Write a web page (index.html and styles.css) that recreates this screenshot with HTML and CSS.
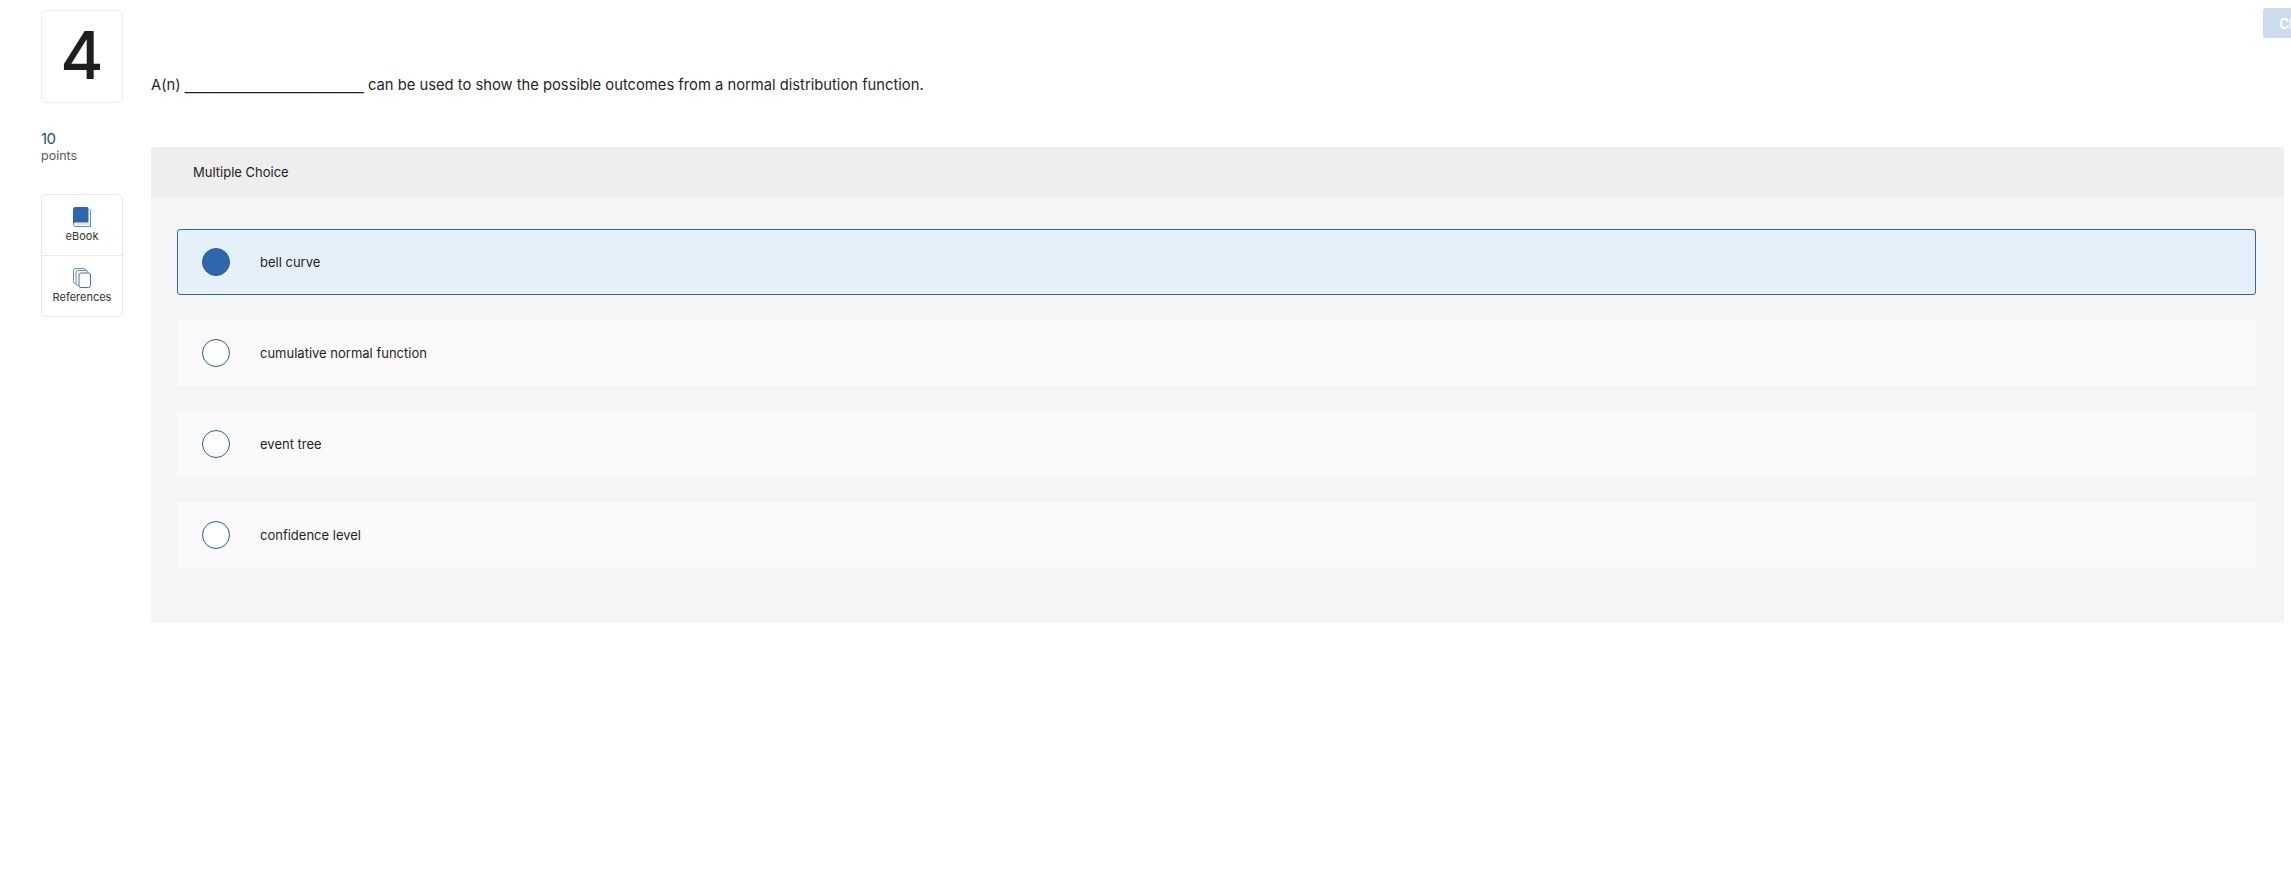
FILE: index.html
```html
<!DOCTYPE html>
<html lang="en">
<head>
<meta charset="utf-8">
<title>Question 4</title>
<link rel="stylesheet" href="styles.css">
</head>
<body>
<button class="check-btn" type="button">Check my work</button>
<div class="page">
  <aside class="side">
    <div class="qnum">4</div>
    <div class="pts">
      <div class="pts-val">10</div>
      <div class="pts-label">points</div>
    </div>
    <div class="tools">
      <div class="tool">
        <svg class="tool-icon" viewBox="0 0 18 20" width="18" height="20" aria-hidden="true">
          <path d="M16 2.500h.5a1 1 0 0 1 1 1V19.500H3a2.500 2.500 0 0 1-2.500-2.500V3" fill="none" stroke="#5d8cc6"/>
          <path d="M3 17H17" stroke="#b4cce8" fill="none"/>
          <path d="M2.500 0H14a1.500 1.500 0 0 1 1.500 1.500V15.500H3a3 3 0 0 0-3 1.500V2.500A2.500 2.500 0 0 1 2.500 0z" fill="#2f67ad"/>
        </svg>
        <span>eBook</span>
      </div>
      <div class="tool">
        <svg class="tool-icon" viewBox="0 0 18 20" width="18" height="20" aria-hidden="true">
          <rect x="0.500" y="0.500" width="12" height="15" rx="2" fill="#fff" stroke="#5d8cc6"/>
          <rect x="3" y="2.500" width="12" height="15" rx="2" fill="#fff" stroke="#5d8cc6"/>
          <rect x="6" y="5" width="11.500" height="14.500" rx="2" fill="#fff" stroke="#3d73b8"/>
        </svg>
        <span>References</span>
      </div>
    </div>
  </aside>
  <main class="main">
    <p class="question">A(n) <span class="blank">____________________</span> can be used to show the possible outcomes from a normal distribution function.</p>
    <section class="panel">
      <header class="panel-head">Multiple Choice</header>
      <div class="options">
        <label class="option selected"><span class="radio"></span><span>bell curve</span></label>
        <label class="option"><span class="radio"></span><span>cumulative normal function</span></label>
        <label class="option"><span class="radio"></span><span>event tree</span></label>
        <label class="option"><span class="radio"></span><span>confidence level</span></label>
      </div>
    </section>
  </main>
</div>
</body>
</html>
```
FILE: styles.css
```css
html, body {
  margin: 0;
  height: 100%;
  overflow: hidden;
  background: #fff;
}
body {
  font-family: "Inter", "Liberation Sans", sans-serif;
  color: #1f1f1f;
  position: relative;
}
.check-btn {
  position: absolute;
  left: 2263px;
  top: 8px;
  width: 140px;
  height: 30px;
  border: 0;
  border-radius: 3px;
  background: #cddcec;
  color: #fff;
  font: 700 14px "Inter", sans-serif;
  white-space: nowrap;
  text-align: left;
  padding: 0 0 0 16px;
}
.page {
  display: flex;
  padding: 10px 7px 0 41px;
  gap: 28px;
}
.side {
  width: 82px;
  flex: none;
}
.qnum {
  box-sizing: border-box;
  height: 93px;
  padding-bottom: 4px;
  border: 1px solid #ebebeb;
  border-radius: 5px;
  display: flex;
  align-items: center;
  justify-content: center;
  font: 500 66px/1 "Inter", sans-serif;
  color: #1f1f1f;
}
.pts {
  margin-top: 27px;
}
.pts-val {
  font-size: 15px;
  font-weight: 400;
  line-height: 18px;
  letter-spacing: -0.5px;
  color: #1d4c8c;
}
.pts-label {
  font-size: 12.500px;
  line-height: 16px;
  color: #5a5a5a;
}
.tools {
  margin-top: 30px;
  border: 1px solid #e8e8e8;
  border-radius: 5px;
}
.tool {
  height: 60px;
  display: flex;
  flex-direction: column;
  align-items: center;
  padding-top: 12px;
  box-sizing: border-box;
  font-size: 11px;
  line-height: 14px;
  color: #333;
}
.tool + .tool {
  height: 61px;
  border-top: 1px solid #e8e8e8;
}
.tool-icon {
  display: block;
  margin-bottom: 2px;
}
.main {
  flex: 1;
  min-width: 0;
}
.question {
  margin: 65px 0 0;
  font-size: 14.750px;
  line-height: 20px;
  color: #1f1f1f;
}
.blank {
  font-family: "Liberation Sans", sans-serif;
  font-size: 16px;
  letter-spacing: 0.050px;
}
.panel {
  margin-top: 52px;
  background: #f5f5f5;
  border-radius: 3px;
  padding-bottom: 55px;
}
.panel-head {
  height: 50px;
  box-sizing: border-box;
  padding: 0 42px;
  display: flex;
  align-items: center;
  background: #eeeeee;
  font-size: 13px;
  border-radius: 3px 3px 0 0;
}
.options {
  display: flex;
  flex-direction: column;
  gap: 25px;
  margin: 32px 28px 0 26px;
}
.option {
  box-sizing: border-box;
  height: 66px;
  display: flex;
  align-items: center;
  gap: 30px;
  padding-left: 24px;
  background: #fafafa;
  border: 1px solid transparent;
  border-radius: 3px;
  font-size: 13px;
}
.option.selected {
  background: #e6f0f9;
  border-color: #2f67ad;
}
.radio {
  box-sizing: border-box;
  width: 28px;
  height: 28px;
  border-radius: 50%;
  border: 1.500px solid #2a5b94;
  background: #fff;
  flex: none;
}
.selected .radio {
  background: #2f67ad;
}
```
